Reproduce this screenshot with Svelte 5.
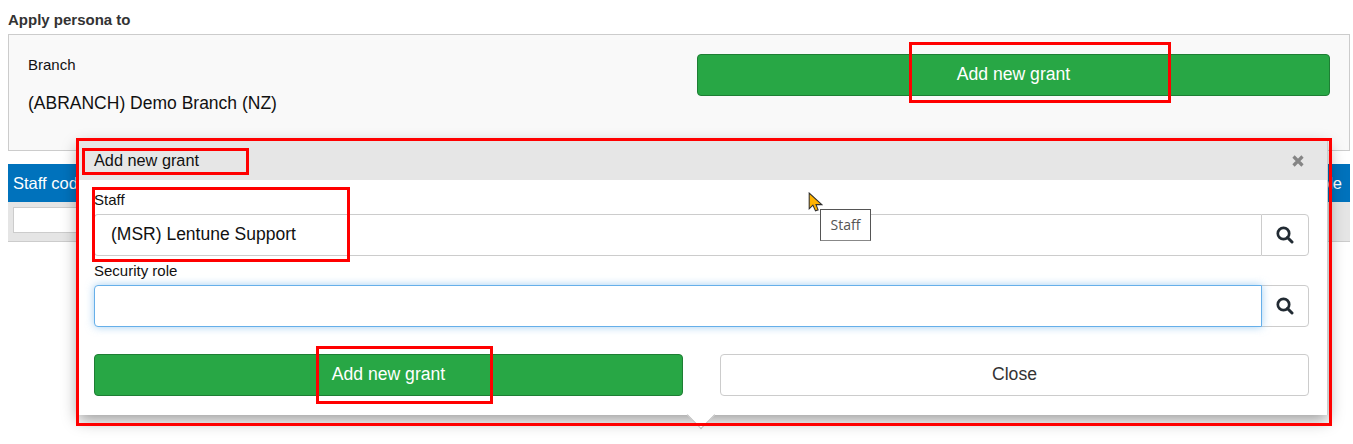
<script>
  const marks = [
    { name: 'top-button', x: 909, y: 42, w: 262, h: 61 },
    { name: 'popover', x: 76, y: 138, w: 1256, h: 288 },
    { name: 'title', x: 82, y: 148, w: 167, h: 27 },
    { name: 'staff', x: 92, y: 187, w: 258, h: 75 },
    { name: 'save', x: 316, y: 346, w: 177, h: 58 }
  ];
</script>

<div class="page">
  <div class="section-title">Apply persona to</div>
  <div class="panel">
    <div class="branch">
      <div class="branch-label">Branch</div>
      <div class="branch-value">(ABRANCH) Demo Branch (NZ)</div>
    </div>
    <button class="btn btn-green top-btn">Add new grant</button>
  </div>

  <div class="grid-head">
    <span>Staff code</span>
    <span>Role</span>
  </div>
  <div class="grid-filter">
    <input class="filter-input" type="text" />
  </div>

  <div class="popover">
    <div class="pop-head">
      <span>Add new grant</span>
      <svg class="close-icon" viewBox="0 0 12 12" width="12" height="12">
        <path d="M1.5 1.5 L10.5 10.5 M10.5 1.5 L1.5 10.5" stroke="#858585" stroke-width="3.2" fill="none" />
      </svg>
    </div>
    <div class="pop-body">
      <div class="field-label">Staff</div>
      <div class="input-group">
        <div class="input">(MSR) Lentune Support</div>
        <div class="addon">
          <svg viewBox="0 0 18 18" width="18" height="18">
            <circle cx="7.5" cy="7.5" r="5.7" stroke="#222b33" stroke-width="2.7" fill="none" />
            <path d="M11.5 11.5 L16 16" stroke="#222b33" stroke-width="3" stroke-linecap="round" />
          </svg>
        </div>
      </div>
      <div class="field-label second">Security role</div>
      <div class="input-group">
        <div class="input focused"></div>
        <div class="addon">
          <svg viewBox="0 0 18 18" width="18" height="18">
            <circle cx="7.5" cy="7.5" r="5.7" stroke="#222b33" stroke-width="2.7" fill="none" />
            <path d="M11.5 11.5 L16 16" stroke="#222b33" stroke-width="3" stroke-linecap="round" />
          </svg>
        </div>
      </div>
      <div class="actions">
        <button class="btn btn-green">Add new grant</button>
        <button class="btn btn-white">Close</button>
      </div>
    </div>
    <div class="arrow"></div>
  </div>

  {#each marks as m}
    <div class="mark" style="left:{m.x}px;top:{m.y}px;width:{m.w}px;height:{m.h}px"></div>
  {/each}

  <svg class="cursor" viewBox="0 0 14 20" width="15" height="21">
    <path d="M1 1 L1 16 L4.5 12.5 L7 18 L9.5 17 L7.5 12 L13 12 Z" fill="#ffb300" stroke="#2e2e2e" stroke-width="1" />
  </svg>
  <div class="tip">Staff</div>
</div>

<style>
  :global(body) {
    margin: 0;
    background: #fff;
  }
  .page {
    position: relative;
    width: 1353px;
    height: 444px;
    overflow: hidden;
    padding: 12px 3px 0 8px;
    box-sizing: border-box;
    font-family: "Liberation Sans", Arial, sans-serif;
    font-size: 15px;
    color: #111;
  }
  .section-title {
    font-weight: bold;
    font-size: 15px;
    line-height: 16px;
    color: #333;
    margin-bottom: 6px;
  }
  .panel {
    display: flex;
    justify-content: space-between;
    height: 117px;
    box-sizing: border-box;
    border: 1px solid #ccc;
    background: #f9f9f9;
    padding: 19px 19px 0 19px;
  }
  .branch-label {
    line-height: 22px;
  }
  .branch-value {
    font-size: 17.5px;
    line-height: 22px;
    margin-top: 16px;
  }
  .btn {
    height: 42px;
    box-sizing: border-box;
    border-radius: 4px;
    font-family: inherit;
    font-size: 17.6px;
    padding: 0 0 1px;
  }
  .btn-green {
    background: #28a745;
    border: 1px solid #1e7e34;
    color: #fff;
  }
  .btn-white {
    background: #fff;
    border: 1px solid #ccc;
    color: #333;
  }
  .top-btn {
    width: 633px;
  }
  .grid-head {
    display: flex;
    justify-content: space-between;
    height: 38px;
    margin-top: 13px;
    padding: 0 8px 0 5px;
    background: #0072bc;
    color: #fff;
    font-size: 16.5px;
    line-height: 38px;
  }
  .grid-filter {
    height: 40px;
    box-sizing: border-box;
    padding: 5px;
    background: #e5e5e5;
    border-bottom: 1px solid #ccc;
  }
  .filter-input {
    display: block;
    width: 200px;
    height: 26px;
    box-sizing: border-box;
    border: 1px solid #ccc;
    background: #fff;
  }
  .popover {
    position: absolute;
    left: 78px;
    top: 141px;
    width: 1250px;
    height: 274px;
    box-sizing: border-box;
    background: #fff;
    border-right: 1px solid #ccc;
    box-shadow: 0 5px 15px rgba(0, 0, 0, 0.4);
  }
  .pop-head {
    display: flex;
    justify-content: space-between;
    align-items: center;
    height: 39px;
    padding: 0 23px 0 16px;
    background: #e6e6e6;
    font-size: 16.3px;
  }
  .pop-body {
    padding: 12px 18px 0 16px;
  }
  .field-label {
    line-height: 16px;
    font-size: 15px;
    margin-bottom: 6px;
  }
  .field-label.second {
    margin-top: 7px;
  }
  .input-group {
    display: flex;
    height: 42px;
  }
  .input {
    flex: 1;
    box-sizing: border-box;
    border: 1px solid #ccc;
    border-right: none;
    border-radius: 4px 0 0 4px;
    padding-left: 16px;
    font-size: 17.5px;
    line-height: 38px;
    background: #fff;
  }
  .input.focused {
    position: relative;
    z-index: 1;
    margin-right: -1px;
    border: 1px solid #66afe9;
    box-shadow: 0 0 8px rgba(102, 175, 233, 0.6);
  }
  .addon {
    display: flex;
    align-items: center;
    justify-content: center;
    width: 48px;
    box-sizing: border-box;
    border: 1px solid #ccc;
    border-radius: 0 4px 4px 0;
    background: #fff;
  }
  .actions {
    display: grid;
    grid-template-columns: 589px 589px;
    justify-content: space-between;
    margin-top: 27px;
  }
  .arrow {
    position: absolute;
    left: 613px;
    bottom: -10px;
    width: 20px;
    height: 20px;
    box-sizing: border-box;
    background: #fff;
    border-right: 1px solid #bbb;
    border-bottom: 1px solid #bbb;
    transform: rotate(45deg);
  }
  .mark {
    position: absolute;
    box-sizing: border-box;
    border: 3px solid #f00;
    pointer-events: none;
  }
  .cursor {
    position: absolute;
    left: 808px;
    top: 192px;
  }
  .tip {
    position: absolute;
    left: 820px;
    top: 209px;
    width: 51px;
    height: 32px;
    box-sizing: border-box;
    border: 1px solid #555;
    border-bottom-color: #888;
    background: #fff;
    color: #555;
    font-family: "Open Sans", sans-serif;
    font-size: 14px;
    line-height: 30px;
    text-align: center;
  }
</style>
